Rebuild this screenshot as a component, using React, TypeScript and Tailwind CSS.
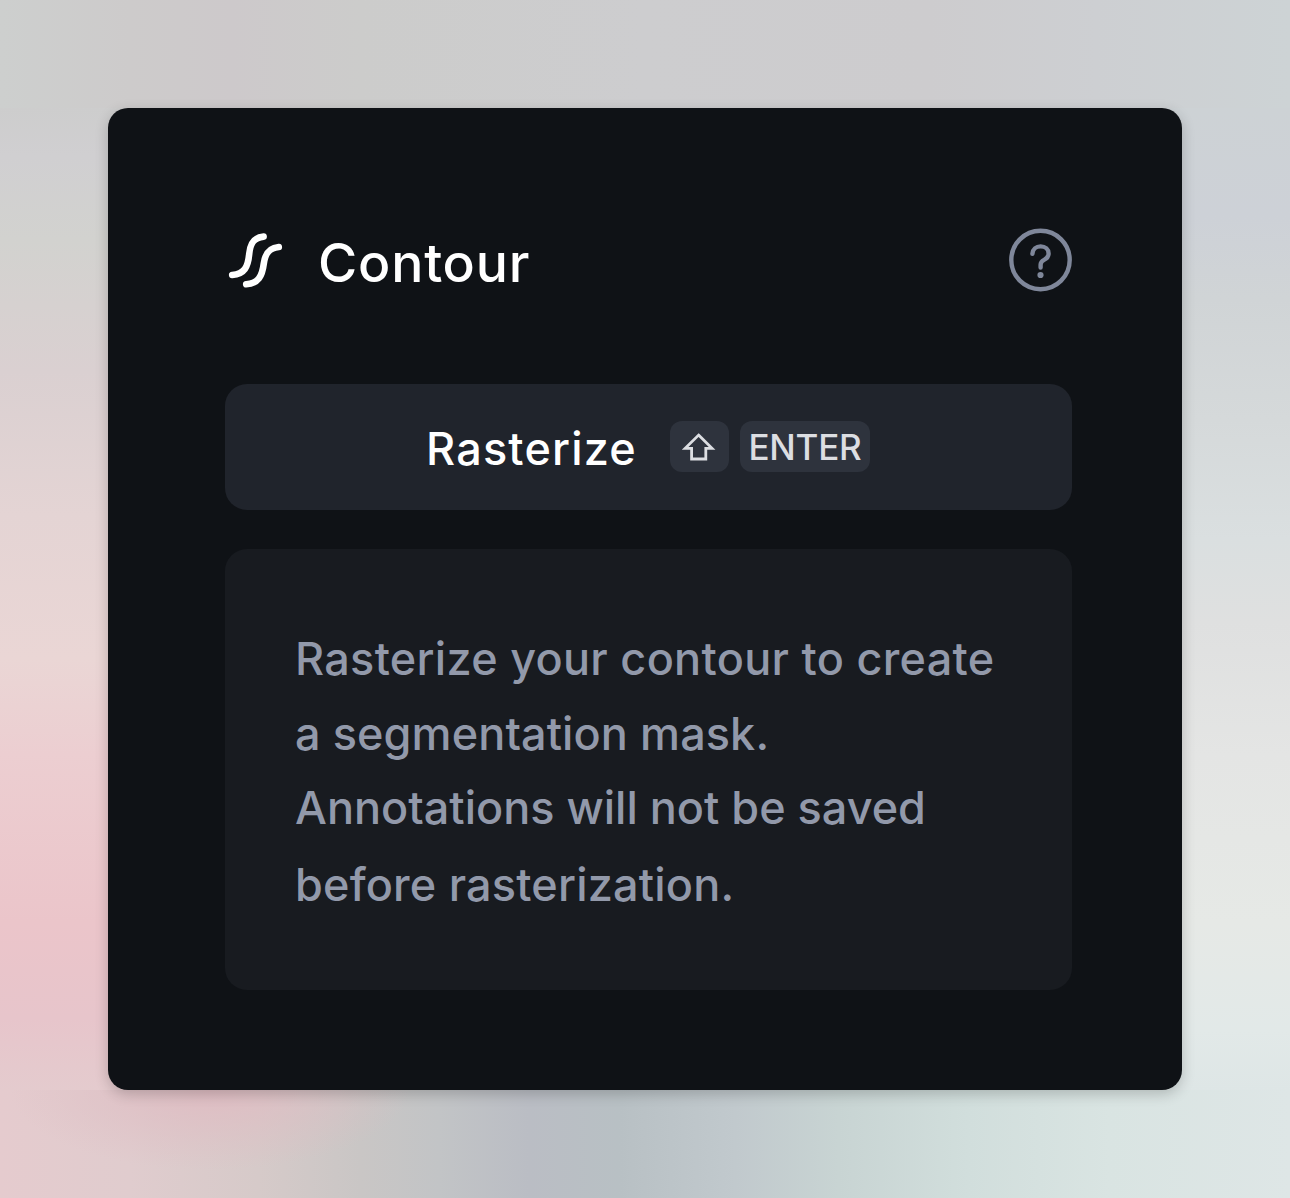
const backdrop =
  "[background:radial-gradient(ellipse_200px_80px_at_210px_0px,#dfbdc3_0%,#dfbdc300_100%)_0_1090px/1290px_108px_no-repeat,linear-gradient(to_right,#cdcfce_0%,#cdcbcb_10%,#cdc9cb_18%,#cccccb_28%,#cdcdcf_50%,#cdccce_72%,#cdcfd2_85%,#cdd3d5_100%)_0_0/1290px_108px_no-repeat,linear-gradient(to_right,#e5cbce_0%,#e0ccce_10%,#d6cac9_20%,#c9c6c5_28%,#c2c4c6_34%,#babdc4_41%,#b8c0c4_48%,#c1c9cd_57%,#c8d4d3_65%,#d1dedc_75%,#d9e4e2_86%,#dee6e6_100%)_0_1090px/1290px_108px_no-repeat,linear-gradient(to_bottom,#cdcfce_0%,#cdcdcd_9%,#d0cfd1_13%,#d2d2cf_20%,#dad0d1_31%,#e4d4d4_43%,#ead6d5_55%,#ecced1_63%,#ebc5ca_77%,#e7c5cb_85%,#e4cbce_91%)_0_0/645px_1198px_no-repeat,linear-gradient(to_bottom,#cdd3d5_0%,#cdd2d5_9%,#cdd1d7_18%,#d0d4d6_25%,#d5d9da_35%,#dadfe0_45%,#dfe0e0_52%,#e4e5e4_63%,#e6e9e6_77%,#e2e9e8_86%,#dee6e6_91%)_645px_0/645px_1198px_no-repeat]";

function ContourIcon() {
  return (
    <svg width="60" height="60" viewBox="0 0 60 60" fill="none" stroke="#fff" strokeWidth="6.6" strokeLinecap="round" className="shrink-0">
      <path d="M38.6 6.6C29 7.4 25.2 13 24.2 24C23 37 19.5 44 7.2 45" />
      <path d="M53.8 17C44 17.8 40.2 23.5 38.8 33.5C37.2 46 33.5 53.4 21.2 54.2" />
    </svg>
  );
}

function HelpIcon() {
  return (
    <svg width="64" height="64" viewBox="0 0 64 64" fill="none" stroke="#7f879a" strokeLinecap="round">
      <circle cx="32.5" cy="32" r="29.2" strokeWidth="4.4" />
      <path d="M24.4 25.8C24.7 21.2 28.2 18.4 32.6 18.4C37.3 18.4 40.6 21.4 40.6 25.4C40.6 28.8 38.7 30.6 36.1 31.9C33.5 33.2 32.6 34.6 32.6 36.8V39.6" strokeWidth="4.4" />
      <circle cx="32.5" cy="47" r="3.1" fill="#7f879a" stroke="none" />
    </svg>
  );
}

function ShiftIcon() {
  return (
    <svg width="36" height="32" viewBox="0 0 36 32" fill="none" stroke="#dcdee2" strokeWidth="2.8">
      <path d="M16.6 4.1L30 17.3H23.8V28H9.6V17.3H3.2Z" />
    </svg>
  );
}

export default function App() {
  return (
    <main className={`flex h-[1198px] w-[1290px] items-start overflow-hidden p-[108px] font-['Inter',sans-serif] font-medium ${backdrop}`}>
      <section className="flex h-[982px] w-[1074px] flex-col rounded-[20px] bg-[#0f1216] pl-[117px] pr-[110px] pt-[120px] shadow-[0_4px_14px_rgba(0,0,0,0.2)]">
        <header className="flex h-16 items-center justify-between">
          <div className="flex items-center">
            <ContourIcon />
            <h1 className="ml-[33px] mt-[6px] whitespace-nowrap text-[53.5px] font-medium leading-[64px] tracking-[0.8px] text-white">Contour</h1>
          </div>
          <button aria-label="Help">
            <HelpIcon />
          </button>
        </header>
        <button className="mt-[92px] flex h-[125.5px] shrink-0 items-center rounded-[22px] bg-[#20242c] pl-[201px]">
          <span className="mt-[4px] w-[244px] whitespace-nowrap text-left text-[45px] leading-[60px] tracking-[1.2px] text-white">Rasterize</span>
          <kbd className="flex h-[51px] w-[59px] items-center justify-center rounded-[12px] bg-[#2e333d]">
            <ShiftIcon />
          </kbd>
          <kbd className="ml-[11px] flex h-[51px] w-[130px] items-center justify-center rounded-[12px] bg-[#2e333d] pt-[2px] font-['Inter',sans-serif] text-[35px] leading-[51px] tracking-[-0.2px] text-[#dcdee2]">
            ENTER
          </kbd>
        </button>
        <div className="mt-[39px] h-[441.5px] shrink-0 rounded-[22px] bg-[#181b20] pl-[70px] pt-[72px] text-[45px] leading-[75px] text-[#9299aa]">
          <p className="whitespace-nowrap">
            <span className="block tracking-[0.3px]">Rasterize your contour to create</span>
            <span className="block h-[74px] tracking-[0.1px]">a segmentation mask.</span>
            <span className="block h-[77px]">Annotations will not be saved</span>
            <span className="block tracking-[0.2px]">before rasterization.</span>
          </p>
        </div>
      </section>
    </main>
  );
}
